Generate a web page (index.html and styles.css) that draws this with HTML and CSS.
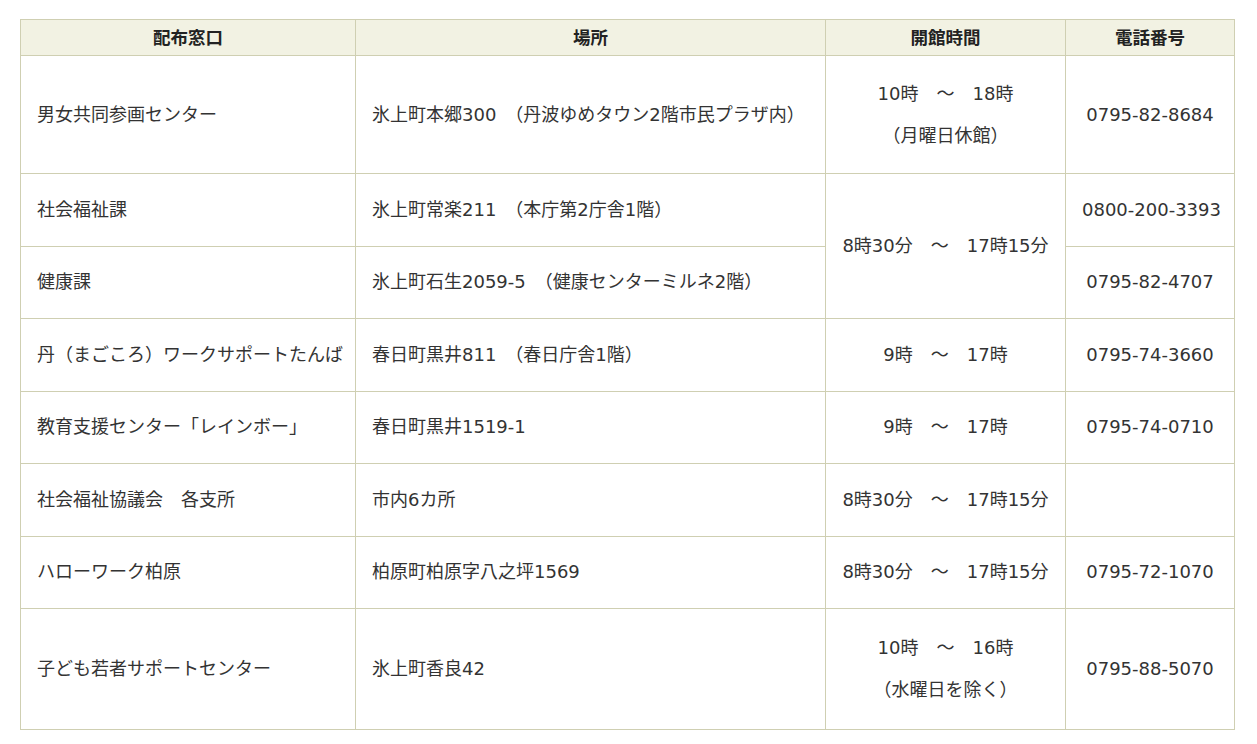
FILE: index.html
```html
<!DOCTYPE html>
<html lang="ja">
<head>
<meta charset="utf-8">
<title>配布窓口</title>
<link rel="stylesheet" href="styles.css">
</head>
<body>
<div class="wrap">
<table class="info">
  <colgroup>
    <col class="c1"><col class="c2"><col class="c3"><col class="c4">
  </colgroup>
  <thead>
    <tr class="head">
      <th>配布窓口</th><th>場所</th><th>開館時間</th><th>電話番号</th>
    </tr>
  </thead>
  <tbody>
    <tr class="tall">
      <td>男女共同参画センター</td>
      <td>氷上町本郷300　（丹波ゆめタウン2階市民プラザ内）</td>
      <td class="ctr two">10時　～　18時<br>（月曜日休館）</td>
      <td class="ctr">0795-82-8684</td>
    </tr>
    <tr class="row">
      <td>社会福祉課</td>
      <td>氷上町常楽211　（本庁第2庁舎1階）</td>
      <td class="ctr" rowspan="2">8時30分　～　17時15分</td>
      <td class="ctr">0800-200-3393</td>
    </tr>
    <tr class="row">
      <td>健康課</td>
      <td>氷上町石生2059-5　（健康センターミルネ2階）</td>
      <td class="ctr">0795-82-4707</td>
    </tr>
    <tr class="row">
      <td>丹（まごころ）ワークサポートたんば</td>
      <td>春日町黒井811　（春日庁舎1階）</td>
      <td class="ctr">9時　～　17時</td>
      <td class="ctr">0795-74-3660</td>
    </tr>
    <tr class="row">
      <td>教育支援センター「レインボー」</td>
      <td>春日町黒井1519-1</td>
      <td class="ctr">9時　～　17時</td>
      <td class="ctr">0795-74-0710</td>
    </tr>
    <tr class="row">
      <td>社会福祉協議会　各支所</td>
      <td>市内6カ所</td>
      <td class="ctr">8時30分　～　17時15分</td>
      <td class="ctr"></td>
    </tr>
    <tr class="row">
      <td>ハローワーク柏原</td>
      <td>柏原町柏原字八之坪1569</td>
      <td class="ctr">8時30分　～　17時15分</td>
      <td class="ctr">0795-72-1070</td>
    </tr>
    <tr class="tall last">
      <td>子ども若者サポートセンター</td>
      <td>氷上町香良42</td>
      <td class="ctr two">10時　～　16時<br>（水曜日を除く）</td>
      <td class="ctr">0795-88-5070</td>
    </tr>
  </tbody>
</table>
</div>
</body>
</html>
```

FILE: styles.css
```css
html, body {
  margin: 0;
  padding: 0;
  background: #ffffff;
}
body {
  font-family: "DejaVu Sans", "Noto Sans CJK JP", sans-serif;
  font-size: 18px;
  color: #333333;
}
.wrap {
  padding: 19px 20px;
}
.info {
  border-collapse: collapse;
  width: 1214px;
  table-layout: fixed;
}
.c1 { width: 335px; }
.c2 { width: 470px; }
.c3 { width: 240px; }
.c4 { width: 169px; }
.info th,
.info td {
  border: 1px solid #cfcfb2;
  padding: 0 16px;
  vertical-align: middle;
  line-height: 26px;
  white-space: nowrap;
}
.info th {
  background: #f2f2e3;
  font-weight: bold;
  font-size: 17.5px;
  text-align: center;
  color: #222222;
}
.head { height: 36px; }
.row { height: 72.5px; }
.tall { height: 118px; }
.tall.last { height: 121px; }
.info td.ctr { text-align: center; }
.info td.two { line-height: 42px; }
```
